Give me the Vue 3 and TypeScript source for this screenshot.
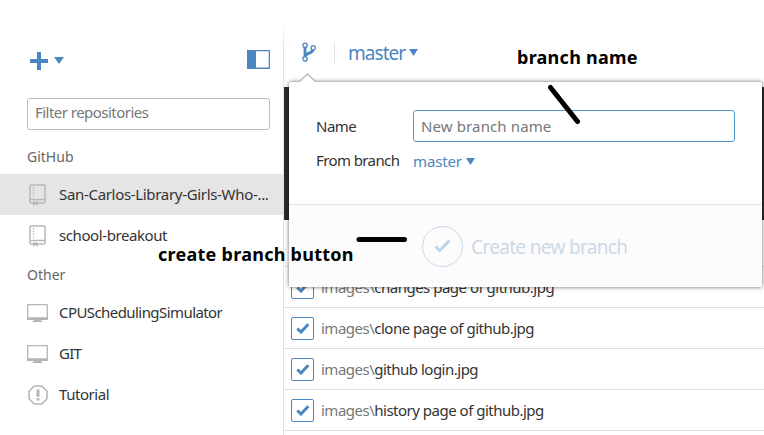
<script setup lang="ts">
interface Repo { name: string; icon: 'book' | 'screen' | 'alert'; cls: string; selected?: boolean }
interface Group { title: string; repos: Repo[] }

const groups: Group[] = [
  {
    title: 'GitHub',
    repos: [
      { name: 'San-Carlos-Library-Girls-Who-...', icon: 'book', cls: 't-san', selected: true },
      { name: 'school-breakout', icon: 'book', cls: 't-school' },
    ],
  },
  {
    title: 'Other',
    repos: [
      { name: 'CPUSchedulingSimulator', icon: 'screen', cls: 't-cpu' },
      { name: 'GIT', icon: 'screen', cls: 't-git' },
      { name: 'Tutorial', icon: 'alert', cls: 't-tut' },
    ],
  },
]

const files = [
  'changes page of github.jpg',
  'clone page of github.jpg',
  'github login.jpg',
  'history page of github.jpg',
]
</script>

<template>
  <div class="app">
    <aside class="sidebar">
      <div class="tools">
        <button class="add" aria-label="Add">
          <svg width="18" height="18" viewBox="0 0 18 18"><path d="M7 0h4v7h7v4h-7v7H7v-7H0V7h7z" /></svg>
          <svg class="caret" width="10" height="7" viewBox="0 0 10 7"><path d="M0 0h10L5 7z" /></svg>
        </button>
        <svg class="split" width="23" height="19" viewBox="0 0 23 19"><path fill-rule="evenodd" d="M0 0h23v19H0zM9 1.2v16.3h12.7V1.2z" /></svg>
      </div>
      <input class="filter" placeholder="Filter repositories" />
      <section v-for="g in groups" :key="g.title">
        <h2>{{ g.title }}</h2>
        <div v-for="r in g.repos" :key="r.name" class="repo" :class="{ selected: r.selected }">
          <span class="icon">
            <svg v-if="r.icon === 'book'" width="17" height="22" viewBox="0 0 17 22">
              <rect x="1" y="1" width="15" height="18" rx="1.2" fill="none" stroke="#b8b8b8" stroke-width="1.5" />
              <path d="M1 15.500h15" stroke="#b8b8b8" stroke-width="1.5" />
              <path d="M4.500 3v11" stroke="#b8b8b8" stroke-width="1.3" stroke-dasharray="1.4 1.4" />
              <path d="M4 17.500h5V22l-2.500-2L4 22z" fill="#b8b8b8" />
            </svg>
            <svg v-else-if="r.icon === 'screen'" width="21" height="18" viewBox="0 0 21 18">
              <path fill="#b5b5b5" fill-rule="evenodd" d="M1 0h19a1 1 0 0 1 1 1v15h-7l.6 1 1.400.4v.6H5v-.6l1.400-.4.600-1H0V1a1 1 0 0 1 1-1zM1.300 1.300v12h18.400v-12z" />
            </svg>
            <svg v-else width="20" height="20" viewBox="0 0 20 20">
              <path d="M6.300 1h7.400L19 6.300v7.400L13.700 19H6.300L1 13.700V6.300z" fill="none" stroke="#b5b5b5" stroke-width="1.5" />
              <path d="M8.500 4.500h3v7.200h-3zM8.500 13h3v2.400h-3z" fill="#b5b5b5" />
            </svg>
          </span>
          <span class="title" :class="r.cls">{{ r.name }}</span>
        </div>
      </section>
    </aside>

    <main class="main">
      <header class="bar">
        <svg class="branch" width="14" height="20" viewBox="0 0 14 20">
          <g fill="none" stroke="#4c86c0">
            <path d="M3 5v10" stroke-width="2.8" />
            <path d="M11 7.500c0 4-7 3-7.600 6.500" stroke-width="3" />
            <g fill="#fff" stroke-width="1.300"><circle cx="3" cy="3.300" r="2.200" /><circle cx="11.200" cy="5.800" r="2.200" /><circle cx="3" cy="16.800" r="2.200" /></g>
          </g>
        </svg>
        <span class="sep"></span>
        <span class="current">master</span>
        <svg class="caret" width="9" height="7" viewBox="0 0 9 7"><path d="M0 0h9L4.500 7z" /></svg>
      </header>
      <div class="band"></div>
      <div class="summary"></div>
      <div v-for="f in files" :key="f" class="file">
        <span class="box"><svg width="14" height="11" viewBox="0 0 14 11"><path d="M1.300 5.500 5 9l7.300-7.700" fill="none" stroke="#4c86c0" stroke-width="3" /></svg></span>
        <span class="path"><span class="dir">images\</span>{{ f }}</span>
      </div>
    </main>

    <div class="popover">
      <svg class="tip" width="18" height="10" viewBox="0 0 18 10"><path d="M0 9.500 8.500 1 17 9.500V10H0z" fill="#fff" /><path d="M0 9 8.500 1 17 9" fill="none" stroke="#bbb" stroke-width="1.300" /></svg>
      <div class="form">
        <label class="t-name">Name</label>
        <input class="name" placeholder="New branch name" />
        <label class="t-from">From branch</label>
        <div class="from"><span>master</span><svg class="caret" width="9" height="7" viewBox="0 0 9 7"><path d="M0 0h9L4.500 7z" /></svg></div>
      </div>
      <div class="create">
        <span class="ring"><svg width="17" height="14" viewBox="0 0 17 14"><path d="M1.500 7.500 5.800 11.500 15.500 1.500" fill="none" stroke="#bfd2e7" stroke-width="3" /></svg></span>
        <span class="t-create">Create new branch</span>
      </div>
    </div>

    <span class="note note-name">branch name</span>
    <span class="note note-create">create branch button</span>
    <svg class="marks" width="764" height="435" viewBox="0 0 764 435"><path d="M550.500 87.500 577.500 121.500M359 239.500H404.500" stroke="#000" stroke-width="5" stroke-linecap="round" /></svg>
  </div>
</template>

<style>
body { margin: 0; }
</style>

<style scoped>
* { box-sizing: border-box; }
.app { position: relative; display: flex; width: 764px; height: 435px; overflow: hidden; background: #fff; color: #333; font: 15px/20px "Noto Sans", "Open Sans", sans-serif; white-space: nowrap; }
.sidebar { width: 283px; flex: none; }
.tools { display: flex; justify-content: space-between; height: 98px; padding: 50px 13px 0 30px; }
.add { display: flex; align-items: center; gap: 6px; height: 21px; padding: 0; border: 0; background: none; }
svg { display: block; flex: none; }
.add path, .split, .caret { fill: #4c86c0; }
.filter { display: block; width: 243px; height: 32px; margin: 0 0 7px 27px; padding: 0 7px 4px; border: 1px solid #bbb; border-radius: 3px; background: #fff; font: inherit; letter-spacing: -0.53px; outline: none; }
input::placeholder { color: #777; opacity: 1; }
h2 { display: flex; align-items: center; height: 37px; margin: 0; padding: 2px 0 0 27px; color: #666; font: inherit; font-size: 14px; }
section + section h2 { height: 36px; }
.repo { display: flex; align-items: center; height: 41px; padding-left: 27px; font-size: 15px; }
.repo.selected { background: #e5e5e5; }
.icon { display: flex; justify-content: center; width: 21px; margin-right: 11px; }
.title { margin-top: -2px; }
.t-san { letter-spacing: -0.32px; }
.t-school { letter-spacing: -0.41px; }
.t-cpu { letter-spacing: -0.57px; }
.t-git { letter-spacing: -0.7px; }
.t-tut { letter-spacing: -0.45px; }
.main { flex: 1; background: linear-gradient(#fff 20px, #e2e2e2 50px) 0 0 / 1px 100% no-repeat; padding-left: 1px; }
.bar { display: flex; align-items: center; height: 87px; padding: 18px 0 0 18px; color: #4c86c0; }
.branch { margin-top: -2px; }
.sep { width: 1px; height: 20px; margin: 0 13px 0 18px; background: #e3e3e3; }
.current { margin-top: 1px; font-size: 19px; letter-spacing: -0.95px; }
.bar .caret { margin: -1px 0 0 4px; }
.band { height: 133px; background: #2c2c2c; }
.summary { height: 47px; border-bottom: 1px solid #e0e0e0; }
.file { display: flex; align-items: center; gap: 7px; height: 41px; padding-left: 7px; border-bottom: 1px solid #e0e0e0; }
.box { display: flex; align-items: center; justify-content: center; width: 23px; height: 23px; margin-top: 1px; border: 1px solid #4c86c0; border-radius: 2px; }
.path { letter-spacing: -0.5px; }
.dir { color: #777; }
.popover { position: absolute; left: 289px; top: 82px; width: 473px; height: 205px; background: #fff; border-radius: 2px; box-shadow: 0 0 4px rgba(0, 0, 0, .6); }
.tip { position: absolute; left: 10px; top: -9px; }
.form { display: grid; grid-template-columns: 97px 322px; grid-template-rows: 32px 38px; align-items: center; height: 123px; padding: 28px 0 0 27px; border-bottom: 1px solid #e0e0e0; }
.name { width: 322px; height: 32px; padding: 0 7px 1px; border: 1px solid #5399cc; border-radius: 3px; background: #fff; font: inherit; letter-spacing: 0.12px; outline: none; }
.t-name { letter-spacing: -0.5px; }
.t-from { margin-top: -2px; letter-spacing: -0.6px; }
.from { display: flex; align-items: center; gap: 4px; color: #4c86c0; letter-spacing: -0.15px; }
.create { display: flex; align-items: center; gap: 8px; height: 82px; padding-left: 133px; background: #fcfcfc; color: #cbd9e7; font-size: 19px; }
.t-create { margin-top: 2px; letter-spacing: -0.67px; }
.ring { display: flex; align-items: center; justify-content: center; width: 41px; height: 41px; border: 1.5px solid #c8d8ea; border-radius: 50%; }
.note { position: absolute; color: #000; font-size: 18px; font-weight: bold; line-height: 24px; letter-spacing: 0.26px; }
.note-name { left: 517px; top: 45px; }
.note-create { left: 158px; top: 242px; }
.marks { position: absolute; left: 0; top: 0; pointer-events: none; }
</style>
